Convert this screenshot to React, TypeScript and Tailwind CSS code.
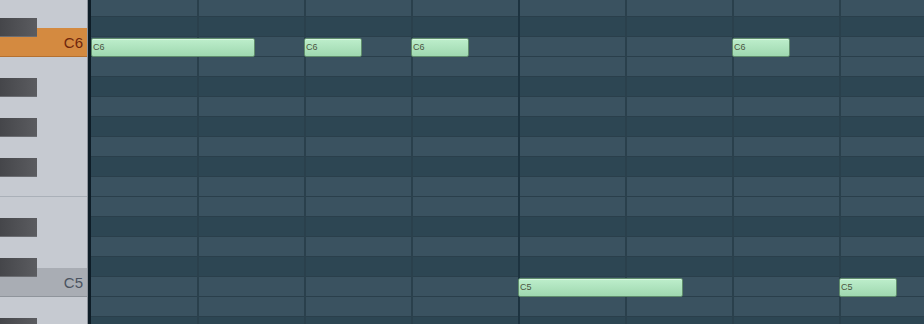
import { clsx } from 'clsx';

// piano roll rows, top to bottom (first row is cut off by the window)
const rows = [
  { name: 'D6', black: false, h: 17 },
  { name: 'C#6', black: true },
  { name: 'C6', black: false },
  { name: 'B5', black: false },
  { name: 'A#5', black: true },
  { name: 'A5', black: false },
  { name: 'G#5', black: true },
  { name: 'G5', black: false },
  { name: 'F#5', black: true },
  { name: 'F5', black: false },
  { name: 'E5', black: false },
  { name: 'D#5', black: true },
  { name: 'D5', black: false },
  { name: 'C#5', black: true },
  { name: 'C5', black: false },
  { name: 'B4', black: false },
  { name: 'A#4', black: true },
];

const blackKeyTops = [18, 78, 118, 158, 218, 258, 318];

const beatLines = [106, 213, 320, 534, 641, 748];

const notes = [
  { label: 'C6', left: 0, top: 38, width: 164 },
  { label: 'C6', left: 213, top: 38, width: 58 },
  { label: 'C6', left: 320, top: 38, width: 58 },
  { label: 'C6', left: 641, top: 38, width: 58 },
  { label: 'C5', left: 427, top: 278, width: 165 },
  { label: 'C5', left: 748, top: 278, width: 58 },
];

const Keyboard = () => {
  return (
    <div className="relative flex h-full w-[88px] shrink-0 flex-col border-r border-[#8e949c] bg-[#c6cad1]">
      <div className="h-[28px] shrink-0" />
      <div className="flex h-[29px] shrink-0 items-center justify-end border-b border-[#b5702f] bg-[#d48a40] pr-[4px] text-[15px] leading-none text-[#6e260c]">
        C6
      </div>
      <div className="h-[140px] shrink-0 border-b border-[#aab0b8]" />
      <div className="h-[71px] shrink-0" />
      <div className="flex h-[29px] shrink-0 items-center justify-end border-b border-[#8f949b] bg-[#a9adb4] pr-[4px] text-[15px] leading-none text-[#4b5360]">
        C5
      </div>
      <div className="flex-1" />
      {blackKeyTops.map((top) => (
        <div
          key={top}
          className="absolute left-0 h-[19px] w-[37px] border-b border-[#6b6d72] bg-gradient-to-r from-[#45464a] to-[#5b5c60]"
          style={{ top }}
        />
      ))}
    </div>
  );
};

const Note = ({
  label,
  left,
  top,
  width,
}: {
  label: string;
  left: number;
  top: number;
  width: number;
}) => (
  <div
    className="absolute flex h-[19px] items-center rounded-[2px] border border-[#5f8c6c] bg-gradient-to-b from-[#bdeecb] to-[#9fd8b0] pl-[1px] text-[9px] leading-none text-[#4a5540] shadow-[inset_0_1px_0_#d6f7df]"
    style={{ left, top, width }}
  >
    {label}
  </div>
);

const App = () => {
  return (
    <div
      className="flex h-[324px] w-[924px] overflow-hidden bg-[#2c4552]"
      style={{ fontFamily: '"Liberation Sans", Arial, sans-serif' }}
    >
      <Keyboard />
      <div className="h-full w-[3px] shrink-0 bg-[#0e1d27]" />
      <div className="relative h-full flex-1 overflow-hidden">
        <div className="flex flex-col">
          {rows.map((r) => (
            <div
              key={r.name}
              className={clsx(
                'shrink-0 border-b border-[#2a3f4b]',
                r.h ? 'h-[17px]' : 'h-[20px]',
                r.black ? 'bg-[#2d4653]' : 'bg-[#3a5260]'
              )}
            />
          ))}
        </div>
        {beatLines.map((x) => (
          <div
            key={x}
            className="absolute top-0 h-full w-[2px] bg-[#2a404c]"
            style={{ left: x }}
          />
        ))}
        <div className="absolute top-0 left-[427px] h-full w-[2px] bg-[#1d3340]" />
        {notes.map((n, i) => (
          <Note key={i} {...n} />
        ))}
      </div>
    </div>
  );
};

export default App;
